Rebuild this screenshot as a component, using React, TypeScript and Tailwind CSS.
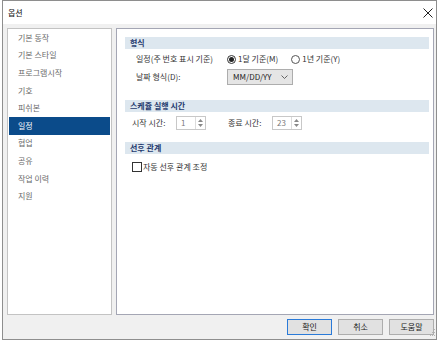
import { useState } from 'react'

const MENU = ['기본 동작', '기본 스타일', '프로그램시작', '기호', '피쉬본', '일정', '협업', '공유', '작업 이력', '지원']

function SectionHeader({ title }: { title: string }) {
  return (
    <div className="h-[12px] bg-[#dde7ef] pl-[5px] flex items-center text-[#1f3a6e] font-bold leading-none">
      {title}
    </div>
  )
}

function Radio({ checked, label }: { checked: boolean; label: string }) {
  return (
    <label className="flex items-center">
      <span
        className={
          'w-[9px] h-[9px] rounded-full border bg-white flex items-center justify-center mr-[2px] ' +
          (checked ? 'border-[#333]' : 'border-[#555]')
        }
      >
        {checked && <span className="w-[5px] h-[5px] rounded-full bg-[#222]" />}
      </span>
      <span>{label}</span>
    </label>
  )
}

function Spin({ value }: { value: string }) {
  return (
    <div className="w-[30px] h-[14px] border border-[#c8c8c8] bg-white flex">
      <span className="flex-1 pl-[4px] text-[#7a7a7a] flex items-center leading-none">{value}</span>
      <span className="w-[10px] border-l border-[#dcdcdc] flex flex-col items-center justify-center gap-[2px]">
        <svg width="5" height="3" viewBox="0 0 5 3"><path d="M0 3 L2.5 0 L5 3 Z" fill="#888" /></svg>
        <svg width="5" height="3" viewBox="0 0 5 3"><path d="M0 0 L2.5 3 L5 0 Z" fill="#888" /></svg>
      </span>
    </div>
  )
}

function Button({ label, primary }: { label: string; primary?: boolean }) {
  return (
    <button
      className={
        'w-[45px] h-[16px] bg-[#e1e1e1] border text-[#222] leading-none flex items-center justify-center ' +
        (primary ? 'border-[#2a7ad8]' : 'border-[#adadad]')
      }
    >
      {label}
    </button>
  )
}

export default function App() {
  const [selected, setSelected] = useState('일정')

  return (
    <div
      className="w-[440px] h-[340px] bg-white text-[8px] text-[#333] overflow-hidden"
      style={{ fontFamily: '"Noto Sans CJK KR", "Noto Sans", sans-serif' }}
    >
      <div className="ml-[2px] w-[435px] h-[340px] border border-[#8e8e8e] bg-[#f0f0f0] flex flex-col">
        {/* Title bar */}
        <div className="h-[23px] bg-white flex items-center justify-between pl-[5px] pr-[3px]">
          <span className="text-[#111]">옵션</span>
          <svg width="10" height="10" viewBox="0 0 10 10">
            <path d="M0.5 0.5 L9.5 9.5 M9.5 0.5 L0.5 9.5" stroke="#222" strokeWidth="1" />
          </svg>
        </div>

        {/* Body */}
        <div className="flex pt-[4px] pl-[4px] pr-[2px] gap-[4px]">
          {/* Menu */}
          <div className="w-[105px] h-[287px] border border-[#c3c3c3] bg-white py-0 px-[1px]">
            {MENU.map((m) => (
              <div
                key={m}
                onClick={() => setSelected(m)}
                className={
                  'h-[17.6px] flex items-center pl-[9px] ' +
                  (selected === m ? 'bg-[#0b4b8a] text-white' : 'text-[#6a6a6a]')
                }
              >
                {m}
              </div>
            ))}
          </div>

          {/* Content */}
          <div className="w-[318px] h-[287px] border border-[#a4a6b4] bg-white pt-[8px] pl-[8px] pr-[4px]">
            <SectionHeader title="형식" />
            <div className="h-[16px] mt-[2px] pl-[11px] flex items-center">
              <span className="w-[91px]">일정(주 번호 표시 기준)</span>
              <Radio checked label="1달 기준(M)" />
              <span className="w-[13px]" />
              <Radio checked={false} label="1년 기준(Y)" />
            </div>
            <div className="h-[16px] mt-[2px] pl-[11px] flex items-center">
              <span className="w-[91px]">날짜 형식(D):</span>
              <div className="w-[66px] h-[16px] bg-[#e5e5e5] border border-[#adadad] flex items-center justify-between pl-[5px] pr-[4px] text-[#222]">
                <span>MM/DD/YY</span>
                <svg width="7" height="4" viewBox="0 0 7 4">
                  <path d="M0.5 0.5 L3.5 3.5 L6.5 0.5" stroke="#555" fill="none" strokeWidth="0.9" />
                </svg>
              </div>
            </div>

            <div className="mt-[15px]">
              <SectionHeader title="스케쥴 실행 시간" />
            </div>
            <div className="h-[14px] mt-[4px] pl-[7px] flex items-center">
              <span className="w-[44px]">시작 시간:</span>
              <Spin value="1" />
              <span className="w-[22px]" />
              <span className="w-[44px]">종료 시간:</span>
              <Spin value="23" />
            </div>

            <div className="mt-[12px]">
              <SectionHeader title="선후 관계" />
            </div>
            <label className="h-[13px] mt-[6px] pl-[7px] flex items-center">
              <span className="w-[10px] h-[10px] border border-[#333] bg-white mr-[1px]" />
              <span>자동 선후 관계 조정</span>
            </label>
          </div>
        </div>

        {/* Buttons */}
        <div className="flex justify-end gap-[6px] mt-[4px] pr-[2px] relative">
          <Button label="확인" primary />
          <Button label="취소" />
          <Button label="도움말" />
          <svg className="absolute right-0 top-[10px]" width="6" height="8" viewBox="0 0 6 8">
            <rect x="4" y="0" width="1" height="1" fill="#b5b5b5" />
            <rect x="2" y="3" width="1" height="1" fill="#b5b5b5" />
            <rect x="4" y="3" width="1" height="1" fill="#b5b5b5" />
            <rect x="0" y="6" width="1" height="1" fill="#b5b5b5" />
            <rect x="2" y="6" width="1" height="1" fill="#b5b5b5" />
            <rect x="4" y="6" width="1" height="1" fill="#b5b5b5" />
          </svg>
        </div>
      </div>
    </div>
  )
}
